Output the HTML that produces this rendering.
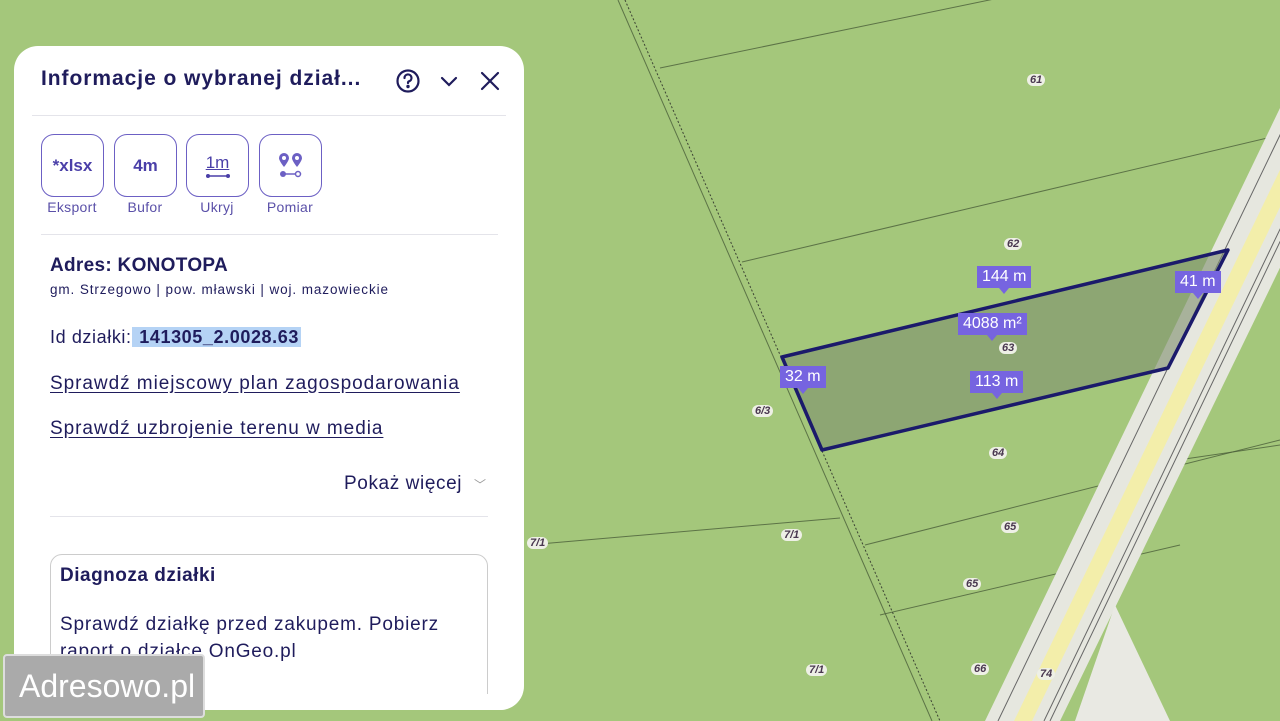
<!DOCTYPE html>
<html><head><meta charset="utf-8"><style>
*{margin:0;padding:0;box-sizing:border-box}
body{width:1280px;height:721px;overflow:hidden;position:relative;background:#a4c77b;font-family:"Liberation Sans",sans-serif;color:#1f1c5c}
#map{position:absolute;left:0;top:0}
.panel{position:absolute;left:14px;top:46px;width:510px;height:664px;background:#fff;border-radius:24px;overflow:hidden}
.t{position:absolute;white-space:nowrap}
.btn{position:absolute;top:88px;width:63px;height:63px;border:1.5px solid #6c60c4;border-radius:13px;display:flex;align-items:center;justify-content:center;color:#4a3fa8;font-size:17px;font-weight:bold}
.lbl{position:absolute;top:153px;font-size:14px;color:#5a50a8;width:80px;text-align:center;letter-spacing:0.3px}
.hr{position:absolute;height:1px;background:#e4e4ea}
a{color:#1f1c5c;text-decoration:underline;text-underline-offset:3px}
.tag{position:absolute;background:#7664e0;color:#fff;font-size:16px;padding:2px 5px;white-space:nowrap}
.tag:after{content:"";position:absolute;left:50%;bottom:-6px;margin-left:-5px;border:5px solid transparent;border-top-color:#7664e0;border-bottom:0;border-width:6px 5px 0}
.num{position:absolute;font-size:11px;font-style:italic;font-weight:bold;color:#4a3850;background:#eef0e6;border-radius:6px;padding:0 3px}
</style></head><body>
<svg id="map" width="1280" height="721">
<g stroke="#4a5e3a" stroke-width="1" fill="none" stroke-opacity="0.8">
<line x1="625" y1="0" x2="940" y2="721" stroke-dasharray="2,2" stroke="#222"/>
<line x1="618" y1="0" x2="932" y2="721"/>
<line x1="660" y1="68" x2="1280" y2="-60"/>
<line x1="742" y1="262" x2="1280" y2="135"/>
<line x1="528" y1="545" x2="840" y2="518"/>
<line x1="865" y1="545" x2="1280" y2="440"/>
<line x1="880" y1="615" x2="1180" y2="545"/>
<line x1="1110" y1="470" x2="1280" y2="445"/>
</g>
<polygon points="1332,0 1410,0 1060,721 985,721" fill="#e6e7df"/>
<polygon points="1362,0 1380,0 1032,721 1014,721" fill="#f3eeaa"/>
<g stroke="#666" stroke-width="1"><line x1="1345" y1="0" x2="998" y2="721"/><line x1="1390" y1="0" x2="1044" y2="721"/><line x1="1396" y1="0" x2="1050" y2="721"/></g>
<polygon points="1115,605 1170,721 1075,721" fill="#e9e9e3"/>
<polygon points="782,357 1228,250 1168,368 822,450" fill="#7e8f6e" fill-opacity="0.6" stroke="#1b1a6b" stroke-width="3.5" stroke-linejoin="round"/>
</svg>
<div class="num" style="left:1027px;top:74px">61</div>
<div class="num" style="left:1004px;top:238px">62</div>
<div class="num" style="left:999px;top:342px">63</div>
<div class="num" style="left:752px;top:405px">6/3</div>
<div class="num" style="left:989px;top:447px">64</div>
<div class="num" style="left:1001px;top:521px">65</div>
<div class="num" style="left:963px;top:578px">65</div>
<div class="num" style="left:781px;top:529px">7/1</div>
<div class="num" style="left:527px;top:537px">7/1</div>
<div class="num" style="left:806px;top:664px">7/1</div>
<div class="num" style="left:971px;top:663px">66</div>
<div class="num" style="left:1037px;top:668px">74</div>
<div class="tag" style="left:977px;top:266px">144 m</div>
<div class="tag" style="left:958px;top:313px">4088 m²</div>
<div class="tag" style="left:1175px;top:271px">41 m</div>
<div class="tag" style="left:780px;top:366px">32 m</div>
<div class="tag" style="left:970px;top:371px">113 m</div>
<div class="panel">
<div class="t" style="left:27px;top:21px;font-size:21px;font-weight:bold;letter-spacing:0.95px">Informacje o wybranej dział...</div>
<svg style="position:absolute;left:382px;top:22px" width="120" height="26" fill="none" stroke="#1f1c5c" stroke-width="2.2" stroke-linecap="round">
<circle cx="12" cy="13" r="10.5"/><path d="M8.5 10a3.5 3.5 0 1 1 4.5 3.3c-.8.3-1 .9-1 1.7"/><circle cx="12" cy="18.5" r=".6" fill="#1f1c5c"/>
<path d="M46 10l7 7 7-7"/><path d="M86 5l16 16M102 5l-16 16"/></svg>
<div class="hr" style="left:18px;top:69px;width:474px"></div>
<div class="btn" style="left:27px">*xlsx</div>
<div class="btn" style="left:100px">4m</div>
<div class="btn" style="left:172px;flex-direction:column"><span style="font-weight:normal;text-decoration:underline">1m</span><svg width="26" height="6"><line x1="3" y1="3" x2="23" y2="3" stroke="#4a3fa8" stroke-width="1.5"/><circle cx="3" cy="3" r="2" fill="#4a3fa8"/><circle cx="23" cy="3" r="2" fill="#4a3fa8"/></svg></div>
<div class="btn" style="left:245px"><svg width="26" height="26" fill="#6c60c4"><path d="M6 0a5 5 0 0 1 5 5c0 3-5 9-5 9S1 8 1 5a5 5 0 0 1 5-5z"/><path d="M19 0a5 5 0 0 1 5 5c0 3-5 9-5 9s-5-6-5-9a5 5 0 0 1 5-5z"/><circle cx="6" cy="5" r="2" fill="#fff"/><circle cx="19" cy="5" r="2" fill="#fff"/><circle cx="5" cy="21" r="3"/><circle cx="20" cy="21" r="2.5" fill="none" stroke="#6c60c4" stroke-width="1.5"/><line x1="5" y1="21" x2="18" y2="21" stroke="#6c60c4" stroke-width="1.5"/></svg></div>
<div class="lbl" style="left:18px">Eksport</div>
<div class="lbl" style="left:91px">Bufor</div>
<div class="lbl" style="left:163px">Ukryj</div>
<div class="lbl" style="left:236px">Pomiar</div>
<div class="hr" style="left:27px;top:188px;width:457px"></div>
<div class="t" style="left:36px;top:209px;font-size:19px;font-weight:bold;letter-spacing:0.3px">Adres: KONOTOPA</div>
<div class="t" style="left:36px;top:236px;font-size:13.5px;letter-spacing:0.9px">gm. Strzegowo | pow. mławski | woj. mazowieckie</div>
<div class="t" style="left:36px;top:281px;font-size:18px;letter-spacing:0.6px">Id działki:<span style="background:#b5d3f5;font-weight:bold;padding:0 2px"> 141305_2.0028.63</span></div>
<div class="t" style="left:36px;top:327px;font-size:19px;letter-spacing:0.95px"><a>Sprawdź miejscowy plan zagospodarowania</a></div>
<div class="t" style="left:36px;top:372px;font-size:19px;letter-spacing:0.95px"><a>Sprawdź uzbrojenie terenu w media</a></div>
<div class="t" style="left:330px;top:427px;font-size:19px;letter-spacing:0.6px">Pokaż więcej <span style="font-size:12px;color:#999;margin-left:6px">﹀</span></div>
<div class="hr" style="left:36px;top:470px;width:438px"></div>
<div style="position:absolute;left:36px;top:508px;width:438px;height:200px;border:1px solid #ccc;border-radius:12px"></div>
<div class="t" style="left:46px;top:519px;font-size:19px;font-weight:bold;letter-spacing:0.5px">Diagnoza działki</div>
<div class="t" style="left:46px;top:565px;font-size:19px;line-height:27px;letter-spacing:0.8px">Sprawdź działkę przed zakupem. Pobierz<br>raport o działce OnGeo.pl</div>
<div style="position:absolute;left:0;top:648px;width:510px;height:20px;background:#fff"></div>
</div>
<div style="position:absolute;left:3px;top:654px;width:202px;height:64px;background:#aaa;border:2px solid #ddd;border-radius:4px;color:#fff;font-size:32px;padding:12px 0 0 14px">Adresowo.pl</div>
</body></html>
